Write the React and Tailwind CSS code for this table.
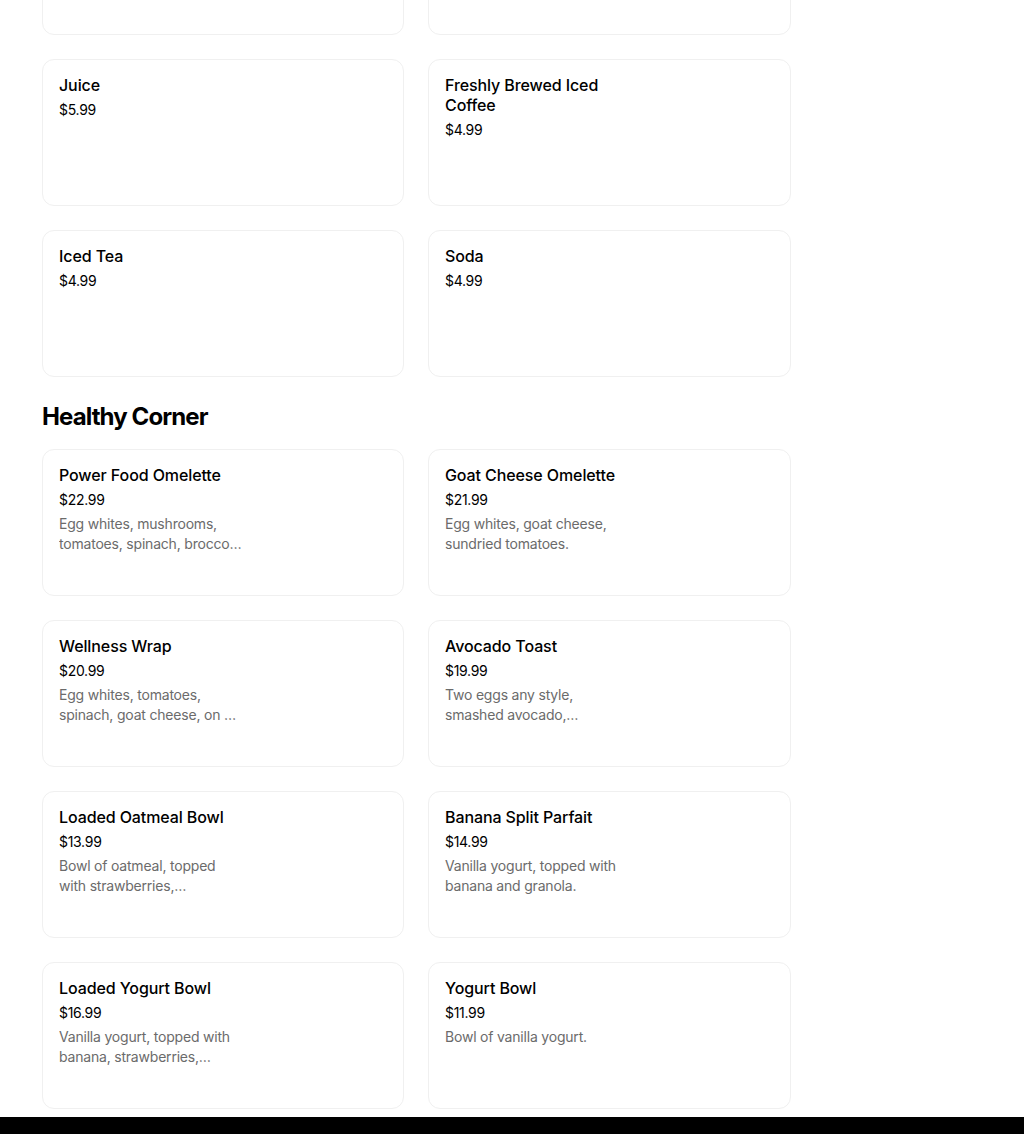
const drinks = [
  { name: '', price: '' },
  { name: '', price: '' },
  { name: 'Juice', price: '$5.99' },
  { name: 'Freshly Brewed Iced Coffee', price: '$4.99' },
  { name: 'Iced Tea', price: '$4.99' },
  { name: 'Soda', price: '$4.99' },
];

const healthy = [
  { name: 'Power Food Omelette', price: '$22.99', desc: 'Egg whites, mushrooms, tomatoes, spinach, broccoli, and feta cheese.' },
  { name: 'Goat Cheese Omelette', price: '$21.99', desc: 'Egg whites, goat cheese, sundried tomatoes.' },
  { name: 'Wellness Wrap', price: '$20.99', desc: 'Egg whites, tomatoes, spinach, goat cheese, on a whole wheat wrap.' },
  { name: 'Avocado Toast', price: '$19.99', desc: 'Two eggs any style, smashed avocado, multigrain toast.' },
  { name: 'Loaded Oatmeal Bowl', price: '$13.99', desc: 'Bowl of oatmeal, topped with strawberries, blueberries and granola.' },
  { name: 'Banana Split Parfait', price: '$14.99', desc: 'Vanilla yogurt, topped with banana and granola.' },
  { name: 'Loaded Yogurt Bowl', price: '$16.99', desc: 'Vanilla yogurt, topped with banana, strawberries, blueberries and granola.' },
  { name: 'Yogurt Bowl', price: '$11.99', desc: 'Bowl of vanilla yogurt.' },
];

function ItemCard({ item }) {
  return (
    <div className="h-[147px] rounded-xl border border-[#f0f0f0] bg-white px-4 pt-[15px]">
      <div className="w-[184px]">
        {item.name && (
          <div className="text-[16px] font-medium leading-5 tracking-[-0.1px] text-black">{item.name}</div>
        )}
        {item.price && (
          <div className="mt-[5px] text-[14px] leading-5 tracking-[-0.3px] text-[#000]">{item.price}</div>
        )}
        {item.desc && (
          <div className="mt-[4px] line-clamp-2 text-[14px] leading-5 tracking-[-0.2px] text-[#6b6b6b]">
            {item.desc}
          </div>
        )}
      </div>
    </div>
  );
}

export default function App() {
  return (
    <div className="min-h-[1134px] overflow-hidden bg-white font-['Inter',sans-serif] flex flex-col">
      <div className="ml-[42px] -mt-[112px] flex-1">
        <div className="grid grid-cols-[362px_363px] gap-6">
          {drinks.map((d, i) => (
            <ItemCard key={i} item={d} />
          ))}
        </div>
        <h2 className="mt-6 mb-4 text-[24px] font-bold leading-8 tracking-[-0.9px] text-black">
          Healthy Corner
        </h2>
        <div className="grid grid-cols-[362px_363px] gap-6">
          {healthy.map((d, i) => (
            <ItemCard key={i} item={d} />
          ))}
        </div>
      </div>
      <div className="h-[17px] bg-black" />
    </div>
  );
}
